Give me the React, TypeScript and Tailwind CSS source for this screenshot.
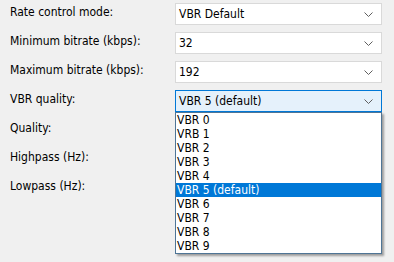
import React from 'react';

const font = { fontFamily: '"DejaVu Sans", "Liberation Sans", sans-serif' };

function Chevron() {
  return (
    <svg width="9" height="5" viewBox="0 0 9 5" className="shrink-0">
      <path d="M0.5 0.5 L4.5 4.5 L8.5 0.5" fill="none" stroke="#5f5f5f" strokeWidth="1" />
    </svg>
  );
}

export default function App() {
  const rows = [
    { label: 'Rate control mode:', value: 'VBR Default' },
    { label: 'Minimum bitrate (kbps):', value: '32' },
    { label: 'Maximum bitrate (kbps):', value: '192' },
    { label: 'VBR quality:', value: 'VBR 5 (default)', open: true },
    { label: 'Quality:', value: '' },
    { label: 'Highpass (Hz):', value: '' },
    { label: 'Lowpass (Hz):', value: '' },
  ];
  const options = ['VBR 0', 'VRB 1', 'VBR 2', 'VBR 3', 'VBR 4', 'VBR 5 (default)', 'VBR 6', 'VBR 7', 'VBR 8', 'VBR 9'];

  return (
    <div className="w-[394px] h-[262px] bg-[#f0f0f0] text-[12px] text-black overflow-hidden" style={font}>
      <div className="flex flex-col gap-[7px] pt-[3px] pl-[10px]">
        {rows.map((row, i) => (
          <div key={i} className="flex items-center h-[22px]">
            <div className="w-[165px] -mt-[5px] [font-stretch:condensed]">{row.label}</div>
            <div className="relative">
              <div
                className={
                  'w-[207px] h-[22px] flex items-center justify-between pl-[3px] pr-[8px] border ' +
                  (row.open ? 'bg-[#e5f1fb] border-[#0078d7]' : 'bg-white border-[#d9d9d9]')
                }
              >
                <span className="[font-stretch:condensed]">{row.value}</span>
                <Chevron />
              </div>
              {row.open && (
                <div className="absolute left-0 top-[22px] w-[207px] z-10 bg-white border border-[#4f7596] shadow-[2px_2px_2px_rgba(0,0,0,0.35)] py-[0px]">
                  {options.map((opt, j) => (
                    <div
                      key={j}
                      className={
                        'h-[14px] leading-[14px] pl-[1px] [font-stretch:condensed] ' +
                        (j === 5 ? 'bg-[#0078d7] text-white' : '')
                      }
                    >
                      {opt}
                    </div>
                  ))}
                </div>
              )}
            </div>
          </div>
        ))}
      </div>
    </div>
  );
}
